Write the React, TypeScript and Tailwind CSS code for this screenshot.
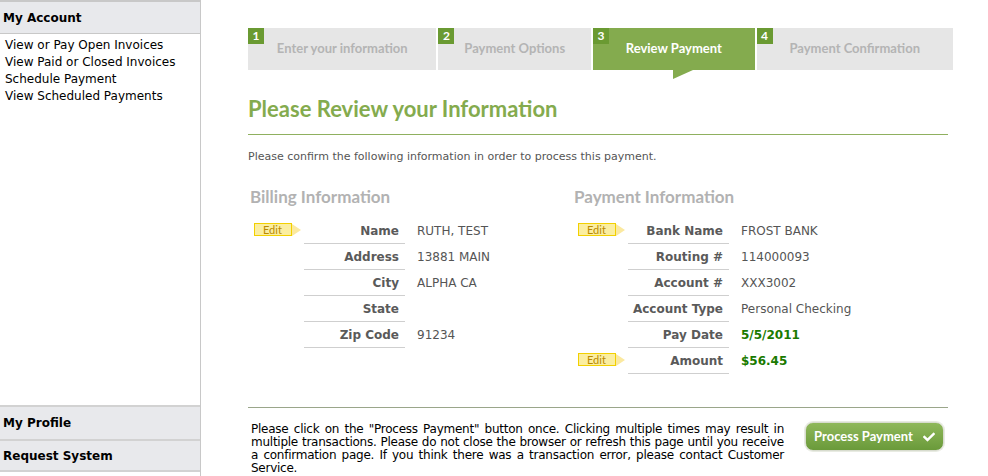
import { FaCheck } from "react-icons/fa";

const verdana = "font-['Verdana','DejaVu_Sans',sans-serif]";
const calibri = "font-['Lato','Open_Sans',sans-serif]";

type Row = { label: string; value: string; edit?: boolean; strong?: boolean };

const billing: Row[] = [
  { label: "Name", value: "RUTH, TEST", edit: true },
  { label: "Address", value: "13881 MAIN" },
  { label: "City", value: "ALPHA CA" },
  { label: "State", value: "" },
  { label: "Zip Code", value: "91234" },
];

const payment: Row[] = [
  { label: "Bank Name", value: "FROST BANK", edit: true },
  { label: "Routing #", value: "114000093" },
  { label: "Account #", value: "XXX3002" },
  { label: "Account Type", value: "Personal Checking" },
  { label: "Pay Date", value: "5/5/2011", strong: true },
  { label: "Amount", value: "$56.45", edit: true, strong: true },
];

function EditTag() {
  return (
    <div className="flex items-center">
      <div className={`h-[13px] w-[38px] border border-[#f2d000] bg-[#fbeea0] text-[11px] leading-[11px] text-[#b98a00] pl-[8px] ${calibri}`}>
        Edit
      </div>
      <div className="w-0 h-0 border-y-[6px] border-y-transparent border-l-[9px] border-l-[#fbe9a0]" />
    </div>
  );
}

function InfoTable({ title, rows }: { title: string; rows: Row[] }) {
  return (
    <div className="w-[324px]">
      <div className={`text-[17px] font-bold text-[#b2b2b2] leading-[20px] ml-[2px] ${calibri}`}>{title}</div>
      <div className="mt-[11px]">
        {rows.map((r) => (
          <div key={r.label} className="flex h-[26px]">
            <div className="w-[56px] pl-[6px] pt-[5px]">{r.edit && <EditTag />}</div>
            <div className="w-[101px] border-b border-[#cfcfcf] text-right pr-[6px] pt-[4px] text-[12px] font-bold text-[#5a5a5a] whitespace-nowrap">
              {r.label}
            </div>
            <div className={`pl-[12px] pt-[4px] text-[12px] whitespace-nowrap ${r.strong ? "font-bold text-[#1a7a00]" : "text-[#555]"}`}>
              {r.value}
            </div>
          </div>
        ))}
      </div>
    </div>
  );
}

function Step({ n, label, active, width }: { n: number; label: string; active?: boolean; width: string }) {
  return (
    <div className={`relative h-[42px] ${width} ${active ? "bg-[#84ab4e]" : "bg-[#e6e6e6]"}`}>
      <div className={`absolute left-0 top-0 w-[16px] h-[16px] bg-[#6a9a32] text-white text-[12px] font-bold flex items-center justify-center ${calibri}`}>
        {n}
      </div>
      <div className={`h-full flex items-center justify-center pb-[1px] text-[13px] font-bold ${active ? "text-white" : "text-[#b4b4b4]"} ${calibri}`}>
        {label}
      </div>
      {active && (
        <div className="absolute left-[80px] top-[42px] w-0 h-0 border-t-[9px] border-t-[#84ab4e] border-r-[20px] border-r-transparent" />
      )}
    </div>
  );
}

export default function App() {
  return (
    <div className={`flex w-[988px] h-[476px] bg-white overflow-hidden ${verdana}`}>
      <div className="w-[201px] shrink-0 border-r border-[#c8c8c8] border-t-2 border-t-[#c8c8c8] flex flex-col">
        <div className="h-[32px] bg-[#e8e9ec] border-b border-[#c8c8c8] flex items-center pl-[3px] text-[12px] font-bold text-black">
          My Account
        </div>
        <div className="pt-[3px] pl-[5px] text-[12px] leading-[17px] text-black">
          <div>View or Pay Open Invoices</div>
          <div>View Paid or Closed Invoices</div>
          <div>Schedule Payment</div>
          <div>View Scheduled Payments</div>
        </div>
        <div className="flex-1" />
        <div className="h-[34px] bg-[#e8e9ec] border-t-2 border-[#d2d2d2] flex items-center pl-[3px] text-[12px] font-bold text-black">
          My Profile
        </div>
        <div className="h-[33px] bg-[#e8e9ec] border-t-2 border-[#d2d2d2] border-b-2 border-b-[#d2d2d2] flex items-center pl-[3px] text-[12px] font-bold text-black mb-[4px]">
          Request System
        </div>
      </div>

      <div className="flex-1 pl-[47px] pt-[28px]">
        <div className="flex gap-[2px] w-[705px]">
          <Step n={1} label="Enter your information" width="w-[189px]" />
          <Step n={2} label="Payment Options" width="w-[153px]" />
          <Step n={3} label="Review Payment" width="w-[162px]" active />
          <Step n={4} label="Payment Confirmation" width="w-[197px]" />
        </div>

        <div className={`mt-[24px] text-[22px] font-bold text-[#84ab4e] leading-[30px] ${calibri}`}>
          Please Review your Information
        </div>
        <div className="w-[700px] h-[1px] bg-[#8fb05f] mt-[10px]" />
        <div className="mt-[15px] text-[11px] text-[#555] leading-[14px]">
          Please confirm the following information in order to process this payment.
        </div>

        <div className="flex mt-[23px]">
          <InfoTable title="Billing Information" rows={billing} />
          <InfoTable title="Payment Information" rows={payment} />
        </div>

        <div className="w-[700px] h-[1px] bg-[#9aa68a] mt-[33px]" />
        <div className="flex items-start w-[700px] mt-[15px]">
          <p className="w-[533px] ml-[3px] text-[12px] leading-[13px] text-black text-justify tracking-[-0.25px]">
            Please click on the "Process Payment" button once. Clicking multiple times may result in multiple transactions. Please do not close the browser or refresh this page until you receive a confirmation page. If you think there was a transaction error, please contact Customer Service.
          </p>
          <button className={`ml-auto mr-[4px] -mt-[1px] w-[139px] h-[29px] rounded-[8px] border border-[#d8dccf] bg-gradient-to-b from-[#8fb85a] to-[#6a9a3a] text-white text-[13px] font-bold flex items-center justify-center gap-[10px] shadow-[0_0_0_1px_#e8ebe2] ${calibri}`}>
            Process Payment
            <FaCheck className="text-[12px]" />
          </button>
        </div>
      </div>
    </div>
  );
}
